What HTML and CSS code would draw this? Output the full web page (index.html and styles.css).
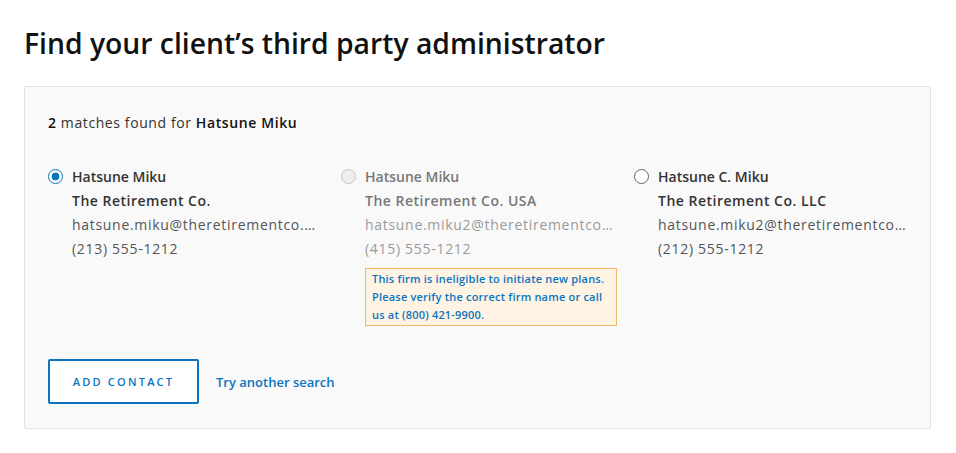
FILE: index.html
```html
<!DOCTYPE html>
<html>
  <head>
    <meta charset="utf-8">
    <link rel="stylesheet" href="styles.css">
  </head>
  <body>
    <h1 class="title">Find your client’s third party administrator</h1>
    <div class="panel">
      <p class="summary"><b>2</b> matches found for <b>Hatsune Miku</b></p>
      <div class="matches">
        <label class="match">
          <span class="radio checked"></span>
          <span class="info">
            <span class="name">Hatsune Miku</span>
            <span class="firm">The Retirement Co.</span>
            <span class="line">hatsune.miku@theretirementco.com</span>
            <span class="line">(213) 555-1212</span>
          </span>
        </label>
        <label class="match disabled">
          <span class="radio"></span>
          <span class="info">
            <span class="name">Hatsune Miku</span>
            <span class="firm">The Retirement Co. USA</span>
            <span class="line">hatsune.miku2@theretirementco.com</span>
            <span class="line">(415) 555-1212</span>
            <span class="notice">This firm is ineligible to initiate new plans. Please verify the correct firm name or call us at (800) 421-9900.</span>
          </span>
        </label>
        <label class="match">
          <span class="radio"></span>
          <span class="info">
            <span class="name">Hatsune C. Miku</span>
            <span class="firm">The Retirement Co. LLC</span>
            <span class="line">hatsune.miku2@theretirementco.com</span>
            <span class="line">(212) 555-1212</span>
          </span>
        </label>
      </div>
      <div class="actions">
        <button class="btn">ADD CONTACT</button>
        <a class="link" href="#">Try another search</a>
      </div>
    </div>
  </body>
</html>
```

FILE: styles.css
```css
body {
  margin: 0;
  padding: 0 24px;
  font-family: "Open Sans", "Noto Sans", sans-serif;
  color: #333;
  background: #fff;
}

.title {
  margin: 0;
  padding-top: 25px;
  font-size: 28.3px;
  line-height: 36px;
  font-weight: 600;
  color: #111;
}

.panel {
  box-sizing: border-box;
  margin-top: 25px;
  width: 907px;
  padding: 24px 23px;
  background: #f9f9f9;
  border: 1px solid #e2e2e2;
  border-radius: 2px;
}

.summary {
  margin: 0;
  font-size: 14px;
  line-height: 24px;
  letter-spacing: 0.6px;
  color: #333;
}
.summary b {
  font-weight: 600;
  color: #111;
}

.matches {
  margin-top: 30px;
  display: grid;
  grid-template-columns: repeat(3, 1fr);
  gap: 20px;
}

.match {
  display: flex;
  min-width: 0;
}

.radio {
  flex: none;
  box-sizing: border-box;
  width: 15px;
  height: 15px;
  margin-top: 4px;
  margin-right: 9px;
  border: 1px solid #666;
  border-radius: 50%;
  background: #fff;
}
.radio.checked {
  border: 1.5px solid #0a74c0;
  background: radial-gradient(circle, #0a74c0 0, #0a74c0 3.6px, #fff 4.2px);
}
.disabled .radio {
  border-color: #c4c4c4;
  background: #eee;
}

.info {
  display: flex;
  flex-direction: column;
  min-width: 0;
  width: 250px;
  font-size: 14px;
  line-height: 24px;
}
.name, .firm {
  font-weight: 600;
  color: #333;
}
.firm {
  letter-spacing: 0.5px;
}
.line {
  letter-spacing: 0.7px;
  color: #555;
  white-space: nowrap;
  overflow: hidden;
  text-overflow: ellipsis;
}
.disabled .name, .disabled .firm {
  color: #777;
}
.disabled .line {
  color: #999;
}

.notice {
  margin-top: 7px;
  padding: 1px 6px 1px;
  width: 238px;
  background: #fff3e4;
  border: 1px solid #f6b766;
  font-size: 11px;
  line-height: 18px;
  font-weight: 600;
  letter-spacing: 0.2px;
  color: #0a74c0;
}

.actions {
  margin-top: 33px;
  display: flex;
  align-items: center;
  gap: 17px;
}

.btn {
  width: 151px;
  height: 45px;
  border: 2px solid #0a74c0;
  border-radius: 2px;
  background: #fff;
  font-family: inherit;
  font-size: 11px;
  font-weight: 600;
  letter-spacing: 2.2px;
  color: #0a74c0;
}

.link {
  font-size: 13px;
  font-weight: 600;
  color: #0a74c0;
  text-decoration: none;
}
```
